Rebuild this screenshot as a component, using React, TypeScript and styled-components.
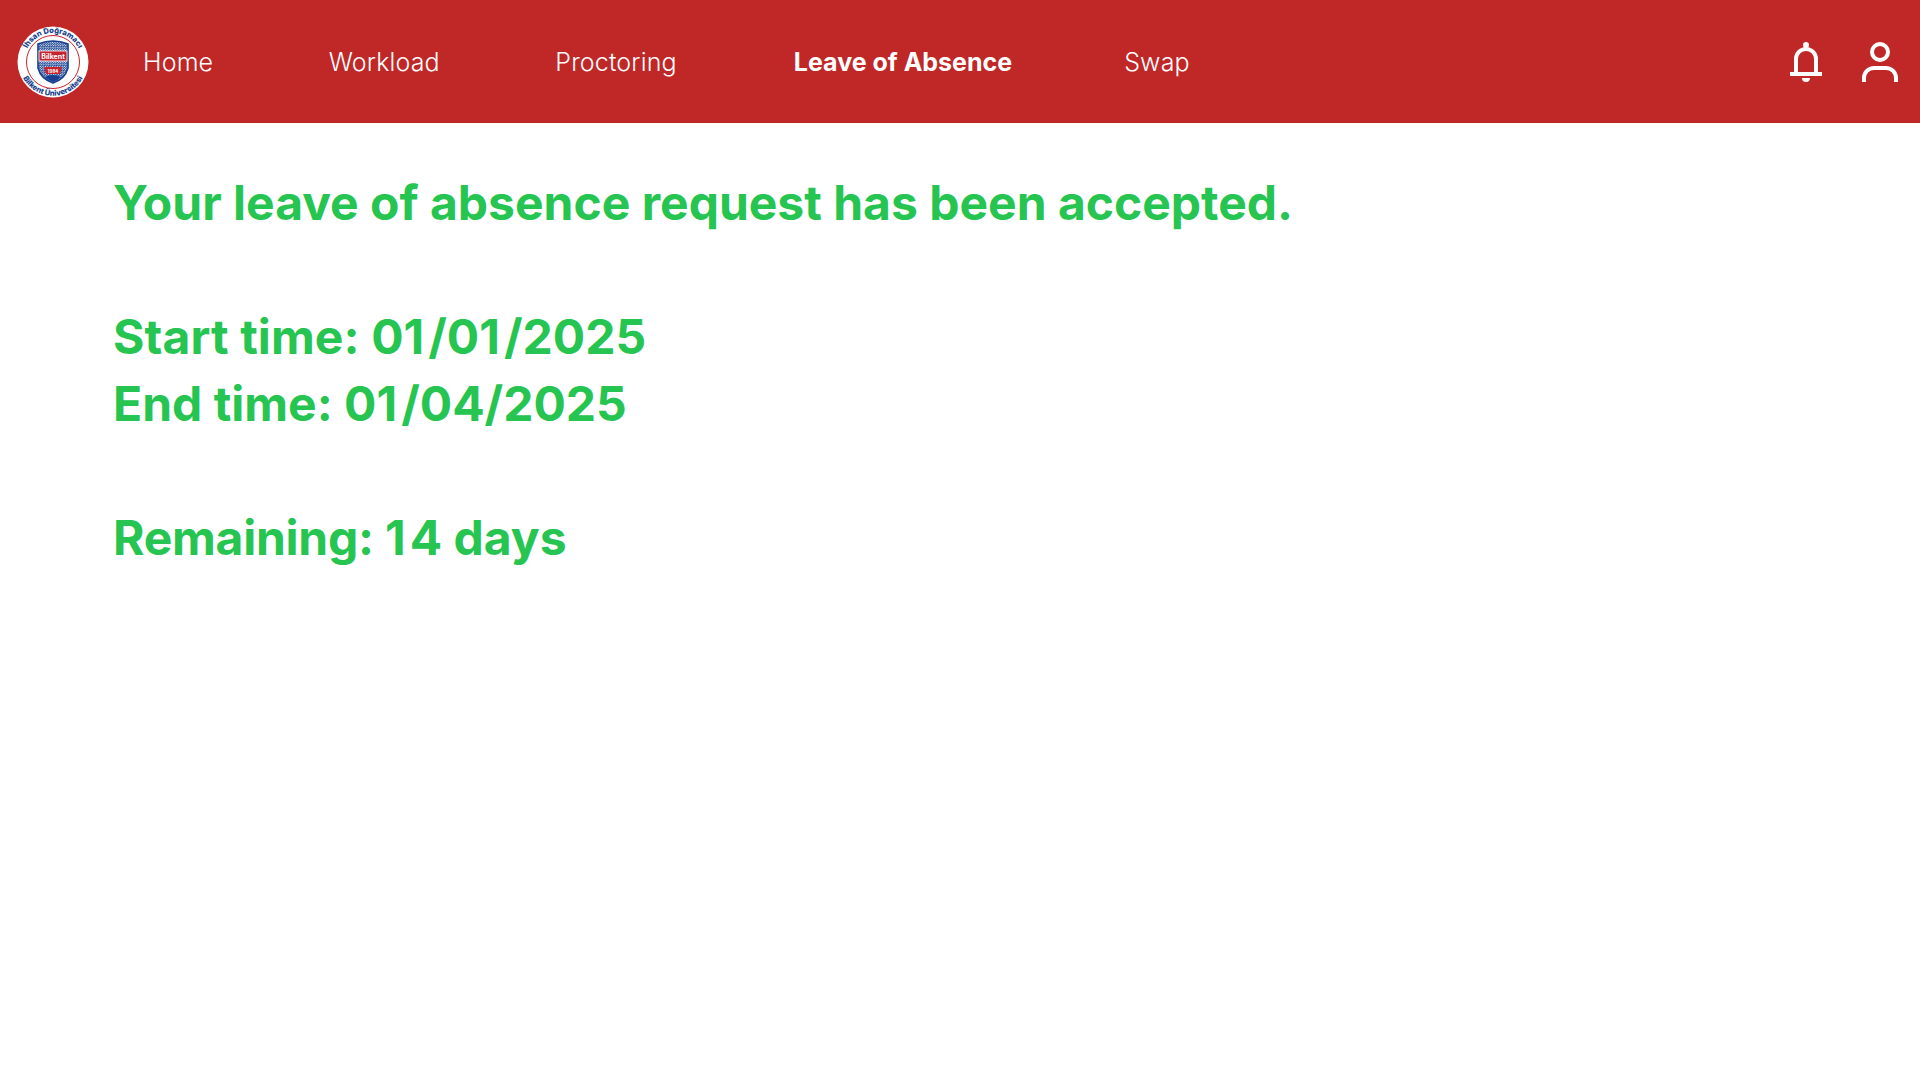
import React from "react";
import styled, { createGlobalStyle } from "styled-components";

const Global = createGlobalStyle`
  html, body { margin: 0; padding: 0; background: #fff; font-family: Inter, "Liberation Sans", sans-serif; }
`;
const Bar = styled.header`
  height: 123px; background: #c02727; display: flex; align-items: center;
  padding: 0 22px 0 17px; box-sizing: border-box;
`;
const Nav = styled.nav`
  display: flex; align-items: center; gap: 115.5px; margin-left: 54px; flex: 1; padding-top: 1px;
`;
const NavItem = styled.a<{ $active?: boolean }>`
  color: #fff; font-size: 25px; line-height: 32px;
  font-weight: ${p => (p.$active ? 700 : 300)};
  letter-spacing: ${p => (p.$active ? "0" : "0.15px")};
  margin: ${p => (p.$active ? "0 -3.5px 0 1.5px" : "0")};
`;
const Actions = styled.div`
  display: flex; align-items: center; gap: 40px;
`;
const Main = styled.main`
  padding: 46px 0 0 113px;
`;
const Line = styled.p<{ $gap?: boolean }>`
  margin: ${p => (p.$gap ? "67px" : "0")} 0 0 0;
  color: #26c450; font-size: 48px; line-height: 67px; font-weight: 700;
`;
const One = styled.span`
  margin-right: 4px;
`;
const Label = styled.span<{ $spacing: string }>`
  letter-spacing: ${p => p.$spacing};
`;

const BLUE = "#163f8f";
const RED = "#c8232c";

const Logo = () => (
  <svg width="72" height="72" viewBox="0 0 72 72" style={{ flexShrink: 0 }}>
    <defs>
      <path id="arcTop" d="M7 36 A29 29 0 0 1 65 36" />
      <path id="arcBottom" d="M2.2 36 A33.8 33.8 0 0 0 69.8 36" />
      <pattern id="rays" width="2.4" height="2.4" patternUnits="userSpaceOnUse">
        <rect width="2.4" height="2.4" fill="#fff" />
        <path d="M0 2.4L2.4 0" stroke={BLUE} strokeWidth="1.3" />
      </pattern>
    </defs>
    <circle cx="36" cy="36" r="35.5" fill="#fff" />
    <circle cx="36" cy="36" r="26.5" fill="#fff" stroke={RED} strokeWidth="1" />
    <text fontFamily="Inter, sans-serif" fontSize="7.6" fontWeight="800" fill={BLUE}>
      <textPath href="#arcTop" startOffset="50%" textAnchor="middle">İhsan Doğramacı</textPath>
    </text>
    <text fontFamily="Inter, sans-serif" fontSize="7.6" fontWeight="800" fill={BLUE}>
      <textPath href="#arcBottom" startOffset="50%" textAnchor="middle">Bilkent Üniversitesi</textPath>
    </text>
    <path d="M21 18 Q36 12 51 18 L51 42 Q48 53 36 57 Q24 53 21 42 Z" fill="url(#rays)" stroke={BLUE} strokeWidth="1.6" />
    <rect x="22" y="25" width="28" height="10" fill={RED} stroke="#fff" strokeWidth="0.8" />
    <text x="36" y="32.6" textAnchor="middle" fontFamily="Inter, sans-serif" fontSize="7" fontWeight="700" fill="#fff">Bilkent</text>
    <path d="M27 41 H45 L43 48 H29 Z" fill={RED} />
    <text x="36" y="46.6" textAnchor="middle" fontFamily="Inter, sans-serif" fontSize="4.5" fontWeight="700" fill="#fff">1984</text>
    <path d="M28 51 Q36 47 44 51 Q41 54 36 56 Q31 54 28 51 Z" fill={BLUE} />
  </svg>
);

const Bell = () => (
  <svg width="32" height="40" viewBox="0 0 32 40" fill="none" stroke="#fff" strokeWidth="4">
    <path d="M6 31 V17 a10 10 0 0 1 20 0 V31" />
    <path d="M0 32 H32" />
    <circle cx="16" cy="3" r="3" fill="#fff" stroke="none" />
    <path d="M12 36 H20 A4 4 0 0 1 12 36 Z" fill="#fff" stroke="none" />
  </svg>
);

const User = () => (
  <svg width="36" height="40" viewBox="0 0 36 40" fill="none" stroke="#fff" strokeWidth="4">
    <circle cx="18" cy="10" r="8" />
    <path d="M2 40 V36 a10 10 0 0 1 10 -10 H24 a10 10 0 0 1 10 10 V40" />
  </svg>
);

export default function App() {
  return (
    <>
      <Global />
      <Bar>
        <Logo />
        <Nav>
          <NavItem>Home</NavItem>
          <NavItem>Workload</NavItem>
          <NavItem>Proctoring</NavItem>
          <NavItem $active>Leave of Absence</NavItem>
          <NavItem>Swap</NavItem>
        </Nav>
        <Actions>
          <Bell />
          <User />
        </Actions>
      </Bar>
      <Main>
        <Line>Your leave of absence request has been accepted.</Line>
        <Line $gap><Label $spacing="0.1px">Start time: </Label>0<One>1</One>/0<One>1</One>/2025</Line>
        <Line>End time: 0<One>1</One>/04/2025</Line>
        <Line $gap><Label $spacing="-0.25px">Remaining: </Label><One>1</One>4 days</Line>
      </Main>
    </>
  );
}
